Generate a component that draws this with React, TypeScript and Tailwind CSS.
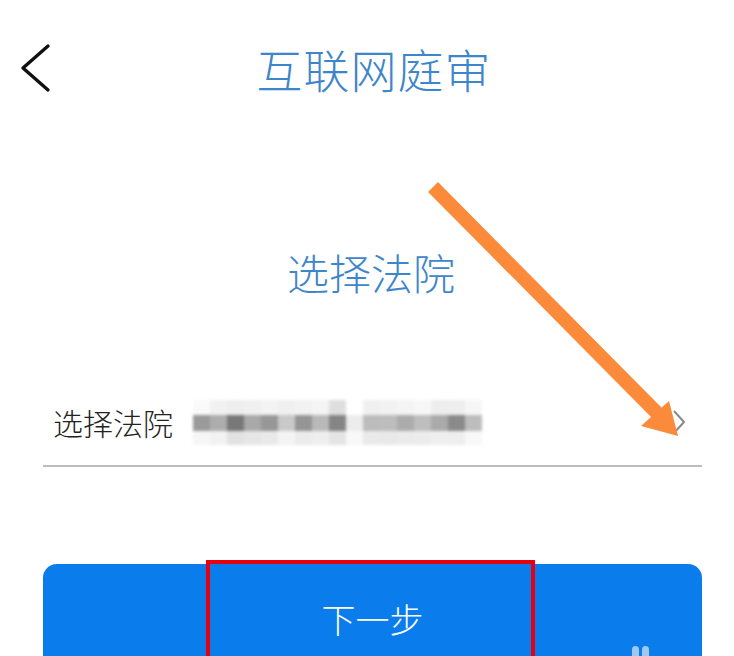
import React from "react";

const center = ["#9a9a9a","#adadad","#787878","#a9a9a9","#979797","#c9c9c9","#959595","#b9b9b9","#858585","#ececec","#bcbcbc","#bdbdbd","#acacac","#bebebe","#aaaaaa","#8a8a8a","#bdbdbd"];
const top = ["#fafafa","#f1f1f1","#eeeeee","#f0f0f0","#f3f3f3","#f0f0f0","#f2f2f2","#f4f4f4","#dedede","#ffffff","#f0f0f0","#f2f2f2","#f4f4f4","#f7f7f7","#ededed","#eeeeee","#f6f6f6"];
const bottom = ["#f6f6f6","#f2f2f2","#e2e2e2","#e6e6e6","#e9e9e9","#f4f4f4","#ececec","#eeeeee","#e4e4e4","#f8f8f8","#eaeaea","#e9e9e9","#ebebeb","#ececec","#efefef","#eeeeee","#f8f8f8"];

export default function App() {
  return (
    <div
      className="relative w-[734px] h-[656px] overflow-hidden bg-white"
      style={{ fontFamily: '"Noto Sans CJK SC", "Noto Sans", sans-serif' }}
    >
      {/* header */}
      <div className="grid grid-cols-[90px_1fr_90px] items-center h-[136px]">
        <div className="pl-[18px] flex items-center">
          <svg width="34" height="52" viewBox="0 0 34 52" fill="none">
            <path d="M30 4 L5 26 L30 48" stroke="#111" strokeWidth="3.4" strokeLinecap="round" strokeLinejoin="round" />
          </svg>
        </div>
        <div className="pl-[14px] text-center text-[46px] leading-[56px] text-[#3e86cb] tracking-[1px] font-light">互联网庭审</div>
        <div />
      </div>

      {/* heading */}
      <div className="mt-[112px] pl-[8px] text-center text-[42px] leading-[48px] text-[#3e86cb] font-light">选择法院</div>

      {/* select row */}
      <div className="ml-[43px] mr-[32px] mt-[96px]">
        <div className="flex items-center h-[60px]">
          <span className="ml-[10px] text-[30px] leading-[36px] text-[#222] font-light">选择法院</span>
          <div className="ml-[20px] flex flex-col blur-[1.5px] rounded-[10px]">
            <div className="flex h-[15px]">
              {top.map((c, i) => (
                <span key={i} className="w-[17px] h-full" style={{ backgroundColor: c }} />
              ))}
            </div>
            <div className="flex h-[16px]">
              {center.map((c, i) => (
                <span key={i} className="w-[17px] h-full" style={{ backgroundColor: c }} />
              ))}
            </div>
            <div className="flex h-[14px]">
              {bottom.map((c, i) => (
                <span key={i} className="w-[17px] h-full" style={{ backgroundColor: c }} />
              ))}
            </div>
          </div>
          <div className="ml-auto mr-[16px] flex items-center">
            <svg width="14" height="26" viewBox="0 0 14 26" fill="none">
              <path d="M2 2 L12 13 L2 24" stroke="#8a8a8a" strokeWidth="2" strokeLinejoin="round" />
            </svg>
          </div>
        </div>
        <div className="mt-[13px] h-[2px] bg-[#bdbdbd]" />
      </div>

      {/* button */}
      <div className="ml-[43px] mr-[32px] mt-[97px] h-[120px] rounded-[14px] bg-[#0b7cec] pt-[34px] text-center">
        <span className="text-[34px] leading-[42px] text-white font-light">下一步</span>
      </div>

      {/* watermark marks */}
      <div className="absolute left-[632px] top-[646px] flex gap-[3px]">
        <span className="w-[7px] h-[14px] rounded-full bg-[#9fc9f2]" />
        <span className="w-[7px] h-[14px] rounded-full bg-[#9fc9f2]" />
      </div>

      {/* red annotation box */}
      <div className="absolute left-[206px] top-[560px] w-[329px] h-[110px] border-[4px] border-[#e8000e]" />

      {/* orange annotation arrow */}
      <svg className="absolute left-0 top-0 pointer-events-none" width="734" height="656" viewBox="0 0 734 656">
        <line x1="433" y1="187" x2="657" y2="413" stroke="#fb8a3b" strokeWidth="14" strokeLinecap="butt" />
        <polygon points="641,426 669,401 678,436" fill="#fb8a3b" />
      </svg>
    </div>
  );
}
